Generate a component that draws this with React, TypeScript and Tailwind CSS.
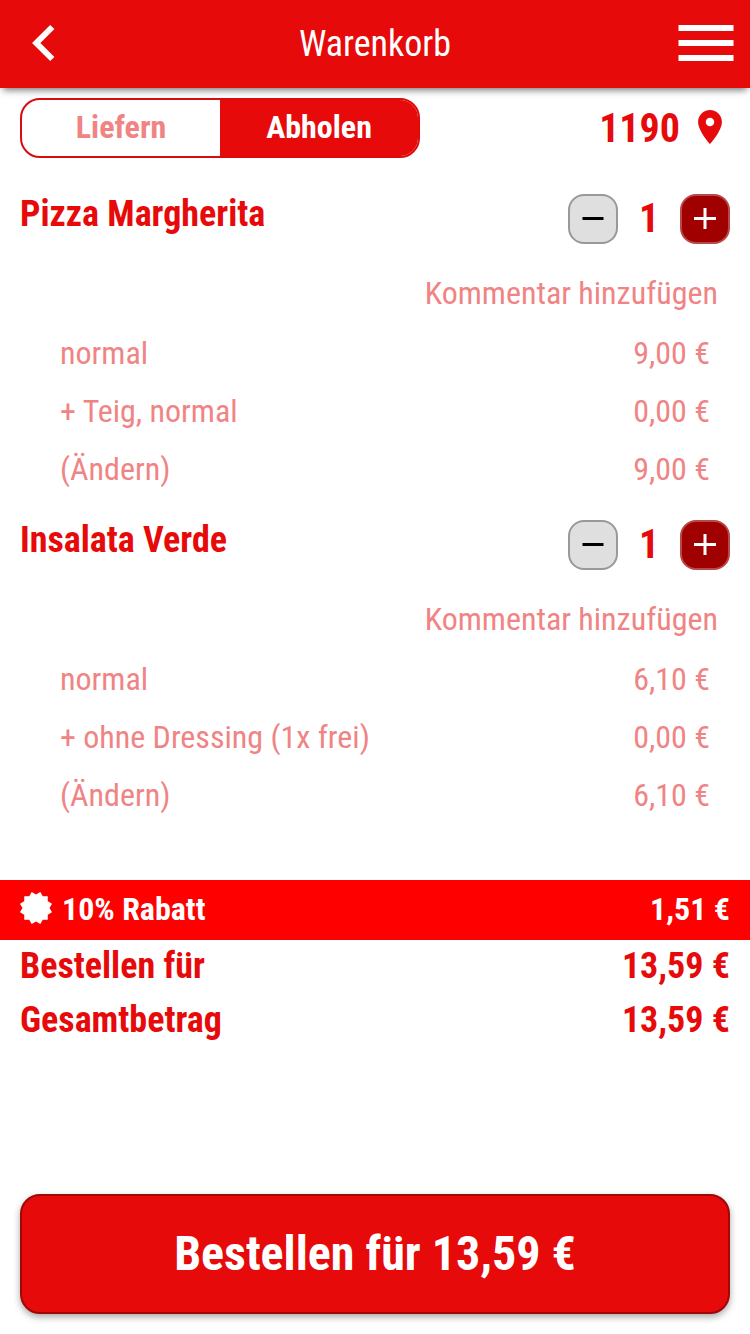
type Option = { label: string; price: string };

const items: { name: string; count: number; options: Option[] }[] = [
  {
    name: "Pizza Margherita",
    count: 1,
    options: [
      { label: "normal", price: "9,00 €" },
      { label: "+ Teig, normal", price: "0,00 €" },
      { label: "(Ändern)", price: "9,00 €" },
    ],
  },
  {
    name: "Insalata Verde",
    count: 1,
    options: [
      { label: "normal", price: "6,10 €" },
      { label: "+ ohne Dressing (1x frei)", price: "0,00 €" },
      { label: "(Ändern)", price: "6,10 €" },
    ],
  },
];

const totals = [
  { label: "Bestellen für", price: "13,59 €" },
  { label: "Gesamtbetrag", price: "13,59 €" },
];

// 12 tips with a notch between each pair
const burstPoints = Array.from({ length: 24 }, (_, i) => {
  const radius = i % 2 ? 15.8 : 12.8;
  const angle = (i * Math.PI) / 12;
  return `${(radius * Math.sin(angle)).toFixed(2)},${(-radius * Math.cos(angle)).toFixed(2)}`;
}).join(" ");

const Header = () => (
  <header className="relative flex h-[88px] items-center justify-between bg-[#e60a0a] pr-[16px] pl-[32px] text-white shadow-[0_5px_7px_-3px_rgba(0,0,0,0.55)]">
    <svg width="24" height="38" viewBox="0 0 24 38" className="-mt-[2px]">
      <path d="M20.3 3 L4.3 19 L20.3 35" fill="none" stroke="currentColor" strokeWidth="6" />
    </svg>
    <h1 className="absolute inset-x-0 text-center text-[36px] leading-[88px]">Warenkorb</h1>
    <svg width="56" height="36" viewBox="0 0 56 36" className="-mt-[2px]">
      <path d="M0.5 3h55M0.5 18h55M0.5 33h55" stroke="currentColor" strokeWidth="6" />
    </svg>
  </header>
);

const CartItem = ({ name, count, options }: (typeof items)[number]) => (
  <section className="h-[326px]">
    <div className="flex h-[50px] justify-between">
      <h2 className="text-[36px] leading-[40px] font-bold">{name}</h2>
      <div className="flex items-center">
        <button className="flex size-[50px] items-center justify-center rounded-[16px] border-2 border-[#999] bg-[#dfdfdf]">
          <svg width="22" height="22" viewBox="0 0 22 22">
            <path d="M0.500 10.500h21" stroke="#000" strokeWidth="3" />
          </svg>
        </button>
        <span className="w-[62px] text-center text-[40px] leading-[50px] font-bold">{count}</span>
        <button className="flex size-[50px] items-center justify-center rounded-[16px] border-2 border-[#b94848] bg-[#a00000]">
          <svg width="22" height="22" viewBox="0 0 22 22">
            <path d="M0 10.500h22M11 0v21" stroke="#fff" strokeWidth="3" />
          </svg>
        </button>
      </div>
    </div>
    <p className="mt-[20px] mb-[2px] pr-[12px] text-right text-[32px] leading-[58px] text-[#f08484]">
      Kommentar hinzufügen
    </p>
    {options.map((option) => (
      <div
        key={option.label}
        className="flex justify-between pr-[20px] pl-[40px] text-[32px] leading-[58px] text-[#f08484]">
        <span>{option.label}</span>
        <span>{option.price}</span>
      </div>
    ))}
  </section>
);

const App = () => {
  return (
    <div className="flex h-[1334px] w-[750px] flex-col bg-white font-['Roboto_Condensed','Roboto',sans-serif] font-stretch-75% text-[#e60a0a]">
      <Header />
      <div className="mt-[10px] flex h-[60px] items-center justify-between pr-[28px] pl-[20px]">
        {/* delivery or pickup */}
        <div className="flex h-[60px] w-[400px] overflow-hidden rounded-[20px] border-2 border-[#dc0c0c] text-center text-[32px] leading-[54px] font-bold">
          <span className="w-[198px] text-[#f08484]">Liefern</span>
          <span className="flex-1 bg-[#e60a0a] text-white">Abholen</span>
        </div>
        <div className="flex items-center gap-[18px] text-[40px] leading-[60px] font-bold">
          <span className="pt-[2px]">1190</span>
          <svg width="24" height="34" viewBox="5 2 14 20" className="-mt-[2px]">
            <path
              fill="currentColor"
              d="M12 2C8.13 2 5 5.13 5 9c0 5.25 7 13 7 13s7-7.75 7-13c0-3.87-3.13-7-7-7zm0 9.500c-1.380 0-2.500-1.120-2.500-2.500s1.120-2.500 2.500-2.500 2.500 1.120 2.500 2.500-1.120 2.500-2.500 2.500z"
            />
          </svg>
        </div>
      </div>
      <main className="mt-[36px] h-[686px] px-[20px]">
        {items.map((item) => (
          <CartItem key={item.name} {...item} />
        ))}
      </main>
      {/* discount */}
      <div className="flex h-[60px] items-start bg-[#ff0000] px-[20px] text-[32px] leading-[58px] font-bold text-white">
        <svg width="32" height="32" viewBox="-16 -16 32 32" className="mt-[12px] mr-[10px]">
          <polygon points={burstPoints} fill="#fff" stroke="#fff" strokeWidth="1.2" strokeLinejoin="round" />
        </svg>
        <span>10% Rabatt</span>
        <span className="ml-auto">1,51 €</span>
      </div>
      <div className="-mt-px">
        {totals.map((total) => (
          <div
            key={total.label}
            className="flex justify-between px-[20px] text-[36px] leading-[54px] font-bold">
            <span>{total.label}</span>
            <span>{total.price}</span>
          </div>
        ))}
      </div>
      <button className="mx-[20px] mt-auto mb-[20px] h-[120px] rounded-[20px] border-2 border-[#a00808] bg-[#e60a0a] text-[48px] font-bold text-white shadow-[0_3px_7px_rgba(0,0,0,0.35)]">
        Bestellen für 13,59 €
      </button>
    </div>
  );
};

export default App;
